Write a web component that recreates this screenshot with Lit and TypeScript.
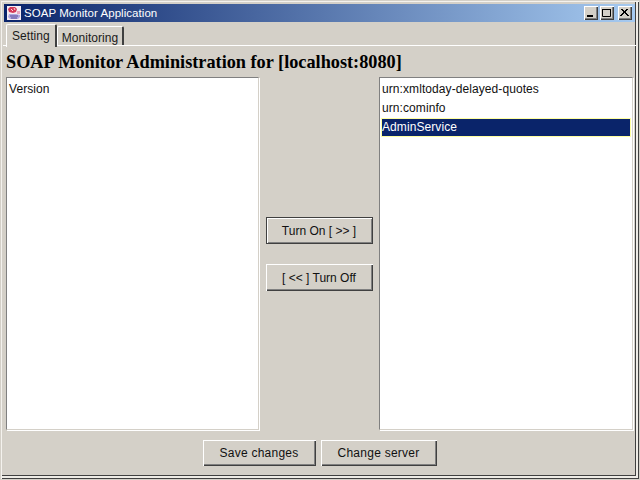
import { LitElement, html, css } from "lit";
import { customElement } from "lit/decorators.js";

@customElement("app-root")
export class AppRoot extends LitElement {
  static styles = css`
    :host { display: block; width: 640px; height: 480px; overflow: hidden; }
    * { box-sizing: border-box; }
    .win {
      width: 640px; height: 480px; background: #d4d0c8; display: flex; flex-direction: column;
      font-family: "Liberation Sans", Arial, sans-serif; font-size: 12px; color: #000;
      border: 1px solid #d4d0c8;
      box-shadow: inset 1px 1px 0 #f4f2ee, inset -1px -1px 0 #404040, inset -3px -3px 0 #eeece6, inset -4px -4px 0 #404040;
      padding: 3px 4px 4px 3px;
    }
    .title {
      height: 18px; flex: none; display: flex; align-items: center; padding: 0 3px 0 2px;
      background: linear-gradient(90deg, #0a246a, #a6caf0); color: #fff; font-size: 11.5px; letter-spacing: 0.05px;
    }
    .logo { width: 16px; height: 16px; flex: none; margin-right: 2px; }
    .title span { flex: 1; }
    .wb {
      width: 14px; height: 14px; background: #d4d0c8; display: flex; align-items: center; justify-content: center;
      box-shadow: inset 1px 1px 0 #fff, inset -1px -1px 0 #404040, inset -2px -2px 0 #808080;
    }
    .wb + .wb { margin-left: 2px; }
    .wb.gap { margin-left: 4px; }
    .wb svg { display: block; }
    .tabs { height: 24px; flex: none; display: flex; align-items: flex-end; padding-left: 2px; padding-top: 2px; position: relative; }
    .tabs::after { content: ""; position: absolute; left: -1px; right: -1px; bottom: 0; height: 1px; background: #fff; }
    .tab {
      height: 20px; padding: 2px 4px 0; display: flex; align-items: center; font-size: 12px; letter-spacing: 0.05px;
      border-top: 1px solid #fff; border-left: 1px solid #fff; border-right: 2px solid #404040; border-radius: 2px 2px 0 0;
      color: #1a1a1a;
    }
    .tab.on { padding: 0 5px 1px 5px; position: relative; z-index: 1; background: #d4d0c8; margin-bottom: -1px; height: 23px; }
    h1 {
      margin: 0; height: 31px; flex: none; padding: 4px 0 0 2px; font: bold 18.25px/24px "Liberation Serif", "Times New Roman", serif; color: #000;
    }
    .mid { flex: 1; min-height: 0; display: grid; grid-template-columns: 253px 120px 254px; padding: 0 0 0 2px; }
    .list {
      background: #fff; border: 1px solid #808080; border-right-color: #d4d0c8; border-bottom-color: #d4d0c8;
      box-shadow: 1px 1px 0 #fff; padding: 2px 1px; height: 353px;
    }
    .row { height: 19px; line-height: 18px; padding-left: 1px; font-size: 12px; letter-spacing: 0.08px; color: #111; }
    .row.sel { background: #0a246a; color: #fff; outline: 1px solid #ffffa0; outline-offset: -1px; }
    .center { display: flex; flex-direction: column; align-items: center; justify-content: center; gap: 20px; }
    button {
      font: 12px "Liberation Sans", Arial, sans-serif; letter-spacing: 0; color: #111; background: #d4d0c8; border: 0; padding: 0;
      box-shadow: inset 1px 1px 0 #fff, inset -1px -1px 0 #404040, inset -2px -2px 0 #808080; height: 27px;
    }
    .center button { width: 107px; }
    .center button.def { box-shadow: inset 0 0 0 1px #404040, inset 2px 2px 0 #fff, inset -2px -2px 0 #808080; }
    .bottom { height: 44px; flex: none; display: flex; justify-content: center; gap: 5px; padding-top: 9px; }
    .bottom button { height: 26px; letter-spacing: 0.25px; }
    .b1 { width: 113px; } .b2 { width: 116px; }
  `;

  render() {
    return html`<div class="win">
      <div class="title">
        <svg class="logo" viewBox="0 0 16 16">
          <rect x="1" y="1" width="14" height="14" fill="#f6ecf2"/>
          <path d="M4 2h5l2 2-1 3-3 1-4-1-1-3z" fill="#d43a58"/>
          <path d="M5 4l2 2M8 3l1 2" stroke="#f8d8e0" stroke-width="1"/>
          <path d="M3 9h7l4 1v2l-2 2H4l-2-2z" fill="#b0a8e0"/>
          <path d="M4 11h8M5 13h6" stroke="#5a4a98" stroke-width="1"/>
          <path d="M11 6h3v3h-3z" fill="#e8a8c0"/>
        </svg>
        <span>SOAP Monitor Application</span>
        <div class="wb"><svg width="10" height="10"><rect x="1" y="7" width="6" height="2" fill="#000"/></svg></div>
        <div class="wb"><svg width="10" height="10"><path d="M0.5 1.5h8v7h-8z M0 1.5h9" fill="none" stroke="#000"/></svg></div>
        <div class="wb gap"><svg width="10" height="10"><path d="M1 1l7 7M8 1l-7 7M2 1l7 7M7 1l-7 7" stroke="#000" fill="none" stroke-width="1"/></svg></div>
      </div>
      <div class="tabs">
        <div class="tab on">Setting</div>
        <div class="tab">Monitoring</div>
      </div>
      <h1>SOAP Monitor Administration for [localhost:8080]</h1>
      <div class="mid">
        <div class="list"><div class="row">Version</div></div>
        <div class="center">
          <button class="def">Turn On [ &gt;&gt; ]</button>
          <button>[ &lt;&lt; ] Turn Off</button>
        </div>
        <div class="list">
          <div class="row">urn:xmltoday-delayed-quotes</div>
          <div class="row">urn:cominfo</div>
          <div class="row sel">AdminService</div>
        </div>
      </div>
      <div class="bottom">
        <button class="b1">Save changes</button>
        <button class="b2">Change server</button>
      </div>
    </div>`;
  }
}
